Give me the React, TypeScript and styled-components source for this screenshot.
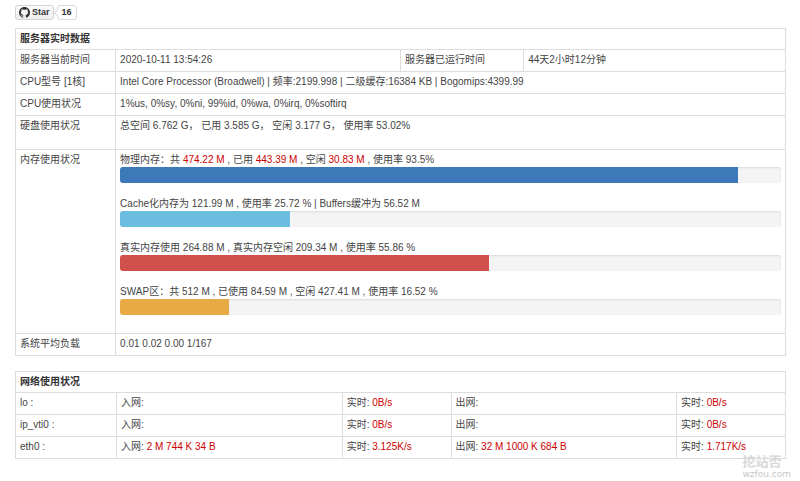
import React from "react";
import styled, { createGlobalStyle } from "styled-components";

const GlobalStyle = createGlobalStyle`
  * { box-sizing: border-box; }
  body {
    margin: 0;
    background: #fff;
    color: #444;
    font: 10px/16px "Liberation Sans", "Noto Sans CJK SC", sans-serif;
  }
`;

const Page = styled.main`
  position: relative;
  padding: 5px 14px 7px 15px;
`;

const StarBar = styled.div`
  display: flex;
  gap: 3px;
  height: 15px;
  margin-bottom: 8px;
`;

const StarButton = styled.button`
  display: flex;
  align-items: center;
  gap: 2px;
  padding: 0 3px;
  border: 1px solid #d5d5d5;
  border-radius: 3px;
  background: linear-gradient(#fcfcfc, #eee);
  color: #333;
  font: bold 9px/13px "Liberation Sans", sans-serif;
`;

const StarCount = styled.a`
  position: relative;
  padding: 0 4px;
  border: 1px solid #d9d9d9;
  border-radius: 3px;
  background: #fff;
  color: #333;
  font: bold 9px/13px "Liberation Sans", sans-serif;
  text-decoration: none;

  &::before {
    content: "";
    position: absolute;
    left: -3px;
    top: 4px;
    width: 5px;
    height: 5px;
    border: solid #d9d9d9;
    border-width: 0 0 1px 1px;
    background: #fff;
    transform: rotate(45deg);
  }
`;

const Table = styled.table`
  width: 100%;
  margin-bottom: 15px;
  table-layout: fixed;
  border-collapse: collapse;
`;

const Col = styled.col<{ $share: number }>`
  width: ${(p) => p.$share}%;
`;

const Heading = styled.th`
  padding: 2px 4px 3px;
  border: 1px solid #ddd;
  color: #333;
  line-height: 15px;
  text-align: left;
`;

const Cell = styled.td<{ $bottom?: number }>`
  padding: 2px 4px ${(p) => p.$bottom ?? 3}px;
  border: 1px solid #ddd;
  vertical-align: top;
  white-space: nowrap;
`;

const Value = styled.span`
  color: #c00;
`;

const Meter = styled.div`
  margin-bottom: 13px;
  line-height: 15px;
`;

const Track = styled.div`
  height: 16px;
  overflow: hidden;
  border-radius: 3px;
  background: #f4f4f4;
  box-shadow: inset 0 1px 2px rgba(0, 0, 0, 0.1);
`;

const Fill = styled.div<{ $color: string }>`
  height: 100%;
  background: ${(p) => p.$color};
`;

const Watermark = styled.div`
  position: absolute;
  right: 9px;
  bottom: 1px;
  color: #c8c8c8;
  font-family: "DejaVu Sans", sans-serif;
  font-size: 9px;
  line-height: 12px;
`;

const WatermarkName = styled.div`
  font-family: "Noto Sans CJK SC", sans-serif;
  font-size: 13px;
  font-weight: bold;
  line-height: 15px;
  color: #d8d8d8;
`;

function GithubMark() {
  return (
    <svg width="11" height="11" viewBox="0 0 16 16" fill="currentColor" aria-hidden="true">
      <path d="M8 0C3.58 0 0 3.58 0 8c0 3.54 2.29 6.53 5.47 7.59.4.07.55-.17.55-.38 0-.19-.01-.82-.01-1.49-2.01.37-2.53-.49-2.69-.94-.09-.23-.48-.94-.82-1.13-.28-.15-.68-.52-.01-.53.63-.01 1.08.58 1.23.82.72 1.21 1.87.87 2.33.66.07-.52.28-.87.51-1.07-1.78-.2-3.64-.89-3.64-3.95 0-.87.31-1.59.82-2.15-.08-.2-.36-1.02.08-2.12 0 0 .67-.21 2.2.82.64-.18 1.32-.27 2-.27s1.36.09 2 .27c1.53-1.04 2.2-.82 2.2-.82.44 1.1.16 1.92.08 2.12.51.56.82 1.27.82 2.15 0 3.07-1.87 3.75-3.65 3.95.29.25.54.73.54 1.48 0 1.07-.01 1.93-.01 2.2 0 .21.15.46.55.38A8.01 8.01 0 0 0 16 8c0-4.42-3.58-8-8-8z" />
    </svg>
  );
}

type UsageProps = { percent: number; color: string; children: React.ReactNode };

function Usage({ percent, color, children }: UsageProps) {
  return (
    <Meter>
      {children}
      <Track role="progressbar" aria-valuenow={percent}>
        <Fill $color={color} style={{ width: `${percent}%` }} />
      </Track>
    </Meter>
  );
}

const interfaces = [
  { name: "lo", input: "", inRate: "0B/s", output: "", outRate: "0B/s" },
  { name: "ip_vti0", input: "", inRate: "0B/s", output: "", outRate: "0B/s" },
  { name: "eth0", input: "2 M 744 K 34 B", inRate: "3.125K/s", output: "32 M 1000 K 684 B", outRate: "1.717K/s" },
];

export default function App() {
  return (
    <Page>
      <GlobalStyle />
      <StarBar>
        <StarButton type="button">
          <GithubMark />
          Star
        </StarButton>
        <StarCount href="#stargazers">16</StarCount>
      </StarBar>

      <Table>
        <colgroup>
          <Col $share={13} />
          <Col $share={37} />
          <Col $share={16} />
          <Col $share={34} />
        </colgroup>
        <thead>
          <tr><Heading colSpan={4}>服务器实时数据</Heading></tr>
        </thead>
        <tbody>
          <tr>
            <Cell>服务器当前时间</Cell>
            <Cell>2020-10-11 13:54:26</Cell>
            <Cell>服务器已运行时间</Cell>
            <Cell>44天2小时12分钟</Cell>
          </tr>
          <tr>
            <Cell>CPU型号 [1核]</Cell>
            <Cell colSpan={3}>Intel Core Processor (Broadwell) | 频率:2199.998 | 二级缓存:16384 KB | Bogomips:4399.99</Cell>
          </tr>
          <tr>
            <Cell>CPU使用状况</Cell>
            <Cell colSpan={3}>1%us, 0%sy, 0%ni, 99%id, 0%wa, 0%irq, 0%softirq</Cell>
          </tr>
          <tr>
            <Cell>硬盘使用状况</Cell>
            <Cell colSpan={3} $bottom={15}>总空间 6.762 G， 已用 3.585 G， 空闲 3.177 G， 使用率 53.02%</Cell>
          </tr>
          <tr>
            <Cell>内存使用状况</Cell>
            <Cell colSpan={3} $bottom={5}>
              <Usage percent={93.5} color="#3d79b8">
                物理内存：共 <Value>474.22 M</Value> , 已用 <Value>443.39 M</Value> , 空闲 <Value>30.83 M</Value> , 使用率 93.5%
              </Usage>
              <Usage percent={25.72} color="#6abddf">
                Cache化内存为 121.99 M , 使用率 25.72 % | Buffers缓冲为 56.52 M
              </Usage>
              <Usage percent={55.86} color="#d0504c">
                真实内存使用 264.88 M , 真实内存空闲 209.34 M , 使用率 55.86 %
              </Usage>
              <Usage percent={16.52} color="#e9aa45">
                SWAP区：共 512 M , 已使用 84.59 M , 空闲 427.41 M , 使用率 16.52 %
              </Usage>
            </Cell>
          </tr>
          <tr>
            <Cell>系统平均负载</Cell>
            <Cell colSpan={3}>0.01 0.02 0.00 1/167</Cell>
          </tr>
        </tbody>
      </Table>

      <Table>
        <colgroup>
          <Col $share={13} />
          <Col $share={29} />
          <Col $share={14} />
          <Col $share={29} />
          <Col $share={14} />
        </colgroup>
        <thead>
          <tr><Heading colSpan={5}>网络使用状况</Heading></tr>
        </thead>
        <tbody>
          {interfaces.map((item) => (
            <tr key={item.name}>
              <Cell>{item.name} :</Cell>
              <Cell>入网: <Value>{item.input}</Value></Cell>
              <Cell>实时: <Value>{item.inRate}</Value></Cell>
              <Cell>出网: <Value>{item.output}</Value></Cell>
              <Cell>实时: <Value>{item.outRate}</Value></Cell>
            </tr>
          ))}
        </tbody>
      </Table>

      <Watermark>
        <WatermarkName>挖站否</WatermarkName>
        wzfou.com
      </Watermark>
    </Page>
  );
}
